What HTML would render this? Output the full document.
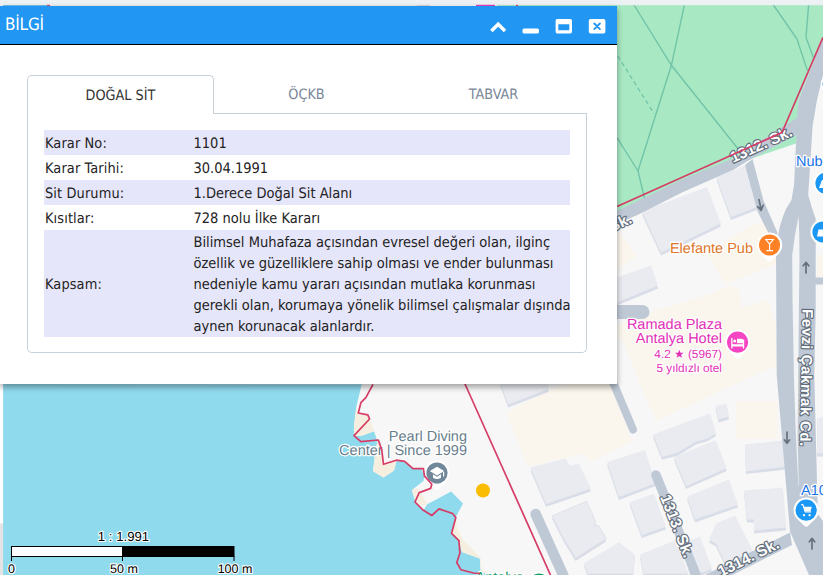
<!DOCTYPE html>
<html lang="tr">
<head>
<meta charset="utf-8">
<title>BİLGİ</title>
<style>
html,body{margin:0;padding:0;}
body{text-rendering:geometricPrecision;width:823px;height:575px;overflow:hidden;position:relative;background:#eef1f3;font-family:"DejaVu Sans Condensed","DejaVu Sans","Liberation Sans",sans-serif;}
#map{position:absolute;left:0;top:0;width:823px;height:575px;display:block;}
#panel{position:absolute;left:0;top:6px;width:617px;height:378px;background:#fff;box-shadow:0 3px 6px rgba(0,0,0,.16),0 3px 6px rgba(0,0,0,.23);}
#hdr{position:absolute;left:0;top:0;width:617px;height:38px;background:#2196f3;border-bottom:1px solid #000;color:#fff;}
#hdr .ttl{position:absolute;left:5px;top:9px;font-size:17px;line-height:20px;letter-spacing:-.2px;white-space:nowrap;}
#hdr svg{position:absolute;left:0;top:0;}
.tabs{position:absolute;left:27px;top:69px;width:560px;height:37px;}
.tab{position:absolute;top:0;height:36px;line-height:40px;text-align:center;font-size:14.3px;color:#7a8799;white-space:nowrap;}
.tab.act{left:0;width:185px;border:1px solid #c8d0d8;border-bottom:none;border-radius:5px 5px 0 0;color:#333;background:#fff;height:38px;}
.tabline{position:absolute;left:186px;right:0;top:38px;height:1px;background:#c8d0d8;}
.box{position:absolute;left:27px;top:107px;width:558px;height:239px;border:1px solid #c8d0d8;border-top:none;border-radius:0 0 5px 5px;}
table{position:absolute;left:44px;top:124px;width:526px;table-layout:fixed;border-collapse:collapse;font-size:14.4px;color:#222;}
td{box-sizing:border-box;padding:4px 0 0 1px;height:25px;line-height:21px;vertical-align:top;white-space:nowrap;}
td.m{padding-top:3.4px;}
td.k{width:148.5px;letter-spacing:.12px;}
td.v{letter-spacing:0;font-size:14.5px;}
tr.o{background:#e6e6fa;}
</style>
</head>
<body>
<svg id="map" width="823" height="575" viewBox="0 0 823 575">
<rect x="0" y="0" width="823" height="575" fill="#f7f7f7"/>
<!-- beige blocks -->
<g fill="#faf6ed">
<polygon points="617,228 637,256 617,270"/>
<polygon points="707,252.6 753,224.4 764,221 778,263 725,284"/>
<polygon points="617,325 650,312 714,293 728,286 738.5,288 741.6,308 767.7,299.6 776,325 776,366 768,369 656,421 640,384 625,345 617,335"/>
<polygon points="506.4,412.4 563,384 610,384 632,441.5 589.3,462.5 585.7,453.4 566.5,458 552,460.7 539,464.3 527.4,466"/>
<polygon points="736.4,401 777.5,401 777.5,439 736.4,439"/>
<polygon points="817,255 823,255 823,277 817,277"/>
</g>
<!-- buildings -->
<g fill="#d9dde7" transform="translate(0,1.400)">
<polygon points="642,213 707,188.5 721,225 661,254"/>
<polygon points="716.5,178.7 746,166.5 758,208 731,218.7"/>
<polygon points="617,279 651,267 658,287 617,304"/>
<polygon points="744.8,445.8 785,441.7 786.6,468 746,472.7"/>
<polygon points="744,492 783,489 786,529 754,532 754,521 747,521"/>
<polygon points="673.8,458.4 715.6,441.7 726.7,469.5 686,487.6"/>
<polygon points="687,498 729,481 738,506 695,521"/>
<polygon points="716,525 735,517 757,560 730,575 716,545 709,541"/>
<polygon points="653,436 710,414.6 716,434.7 707,440 696,443 678,454 662,458.4"/>
<polygon points="607,463.5 645,451.5 655.6,484.6 619,498.5"/>
<polygon points="629.6,503.7 654,495 666,528 641.7,536.7"/>
<polygon points="640,556 674.8,542 688.7,575 643.5,575"/>
<polygon points="530.4,469 565,460 570,467 579,465.4 591,490 546,505.4"/>
<polygon points="552,517.3 586.8,502.6 595.8,523.5 593.7,526.3 599.3,527.7 606.2,540.2 575.6,559.7 564.5,541.6"/>
<polygon points="584,564.6 619,543.7 634.8,556 633,575 588,575"/>
<polygon points="500,384 548.3,384 548.3,390.5 508.2,406"/>
<polygon points="715.6,407.5 726.5,405 729,418 718.5,421"/>
<polygon points="683,545 700,538 712,570 700,575 690,575"/>
<polygon points="817,420 823,418 823,455 817,455"/>
</g>
<g fill="#e9ebf1" transform="translate(0,-1.400)">
<polygon points="642,213 707,188.5 721,225 661,254"/>
<polygon points="716.5,178.7 746,166.5 758,208 731,218.7"/>
<polygon points="617,279 651,267 658,287 617,304"/>
<polygon points="744.8,445.8 785,441.7 786.6,468 746,472.7"/>
<polygon points="744,492 783,489 786,529 754,532 754,521 747,521"/>
<polygon points="673.8,458.4 715.6,441.7 726.7,469.5 686,487.6"/>
<polygon points="687,498 729,481 738,506 695,521"/>
<polygon points="716,525 735,517 757,560 730,575 716,545 709,541"/>
<polygon points="653,436 710,414.6 716,434.7 707,440 696,443 678,454 662,458.4"/>
<polygon points="607,463.5 645,451.5 655.6,484.6 619,498.5"/>
<polygon points="629.6,503.7 654,495 666,528 641.7,536.7"/>
<polygon points="640,556 674.8,542 688.7,575 643.5,575"/>
<polygon points="530.4,469 565,460 570,467 579,465.4 591,490 546,505.4"/>
<polygon points="552,517.3 586.8,502.6 595.8,523.5 593.7,526.3 599.3,527.7 606.2,540.2 575.6,559.7 564.5,541.6" stroke="#dadee6" stroke-width="0.800"/>
<polygon points="584,564.6 619,543.7 634.8,556 633,575 588,575"/>
<polygon points="500,384 548.3,384 548.3,390.5 508.2,406"/>
<polygon points="715.6,407.5 726.5,405 729,418 718.5,421"/>
<polygon points="683,545 700,538 712,570 700,575 690,575"/>
<polygon points="817,420 823,418 823,455 817,455"/>
</g>
<!-- park -->
<polygon fill="#a8e9c4" points="617,5 823,5 823,38 798.6,100 796,143.5 752.6,158.3 733,167 617,222"/>
<g fill="none" stroke="#72c4a8" stroke-width="1.400">
<path d="M634,5 L671.400,65.300 L739,150"/>
<path d="M684.400,5 L671.400,65.300 L638,171 L645.400,202"/>
<path d="M617,137.600 L638,171"/>
<path d="M773.400,5 L797,39 L807.300,70.400"/>
<path d="M808.600,5 L806,37.400 L813.400,57.400"/>
<path d="M617.800,56 L654,113.600" stroke-dasharray="4.500 3" stroke-width="1.300"/>
<path d="M739,150 L744,163"/>
</g>
<!-- roads -->
<g fill="#bfc9d6">
<polygon points="823,38 798.6,100 797,118 796,143.5 794,185 791.5,200 786,209 782.8,217 780,226 777.5,238 776,255 776.7,375 790,531.5 809,575 823,575 823,521 817.8,514 814.3,375 815.7,310 815.7,219 811.6,206.7 808.2,195 812.6,126 817,100 823,75"/>
<polygon points="797,118 766,137.5 733,158.5 683,179 617,211 617,224 640,213.8 683,192 733,170 752.6,158 797,134.8"/>
<polygon points="745,165 752.5,159 763.5,200.4 777.4,232.6 776,245 768.7,233.5 757.4,211"/>
<polygon points="790,532.4 705,575 732,575 792,545"/>
<polygon points="814,277.5 823,277.5 823,284.5 814,284.5"/>
</g>
<g fill="none" stroke="#bfc9d6" stroke-width="8" stroke-linecap="round">
<path d="M610,375 L633,429.5"/>
<path d="M535.6,514 L565.4,580" stroke-width="10.500"/>
<path d="M656,475 L698,580" stroke-width="9.500"/>
<path d="M600,312 L642.5,312" stroke-width="14"/>
</g>
<!-- median -->
<polygon fill="#f3f4f5" points="798.5,216 795,235 792.2,255 792.5,300 794,380 796,438 798.4,486 798.8,486 797.6,438 798.2,380 799,300 799.5,255 799.2,232"/>
<!-- sea -->
<polygon fill="#90daee" points="0,384 361.7,384.3 356.5,406 354,425 354,435.7 361.7,435.7 374,431.3 377.4,441 375,455 373,471.3 383.5,477.4 394,470.4 396.5,461 404.6,461.3 413,468.6 421.3,468.6 424.4,475.9 423.4,481 411.9,490 415.5,502 423.4,510.3 427.2,504.3 451.2,491.5 463,503.4 456.4,516 455.8,517.6 451.6,533.3 458.9,540.6 462,552 479.8,558.4 480.8,572 490,575 0,575"/>
<!-- beach -->
<g fill="#f6efdf">
<polygon points="356.2,408 358.3,413 367.8,414.8 369.6,419 377.4,440 374,431.3 361.7,435.7 354,435.7 354,425"/>
<polygon points="377.4,441 381.7,449.6 383.5,464.3 396.5,461 394,470.4 383.5,477.4 373,471.3 375,455"/>
<polygon points="411.9,490 417,488 427.6,503.4 423.4,506 415.5,502"/>
<polygon points="455.8,517.6 456.8,527 463,539.5 480.8,558 481,569 492,575 480.8,572 479.8,558.4 462,552 458.9,540.6 451.6,533.3"/>
</g>
<circle cx="483" cy="490.500" r="7" fill="#fbbc04"/>
<!-- top strip / left strip -->
<rect x="0" y="0" width="823" height="5.200" fill="#eef1f3"/>
<rect x="3" y="5" width="44" height="1" fill="#74bfe9"/>
<rect x="47" y="4.800" width="3" height="1.200" fill="#d2486c"/>
<rect x="50" y="5.200" width="367" height="0.800" fill="#ece6e2"/>
<rect x="417" y="5" width="13" height="1" fill="#dccfd2"/>
<rect x="476" y="4.800" width="19" height="1.200" fill="#e63cc0"/>
<rect x="497" y="5" width="120" height="1" fill="#a8e9c4"/>
<rect x="516" y="4.800" width="2" height="1.200" fill="#d2486c"/>
<rect x="0" y="384" width="3.100" height="140" fill="#ffffff"/>
<rect x="0" y="523.500" width="3.100" height="52" fill="#e4e4e4"/>
<!-- street labels -->
<g font-family="'Liberation Sans','DejaVu Sans',sans-serif" font-weight="bold" fill="#ffffff" stroke="#616c7a" stroke-width="2.300" stroke-linejoin="round" paint-order="stroke" font-size="15.500">
<text transform="translate(733,163) rotate(-24.500)">1312. Sk.</text>
<text transform="translate(633,222.500) rotate(-24.500)" text-anchor="end">1312. Sk.</text>
<text transform="translate(802.500,309) rotate(91)" font-size="15" letter-spacing="0.650">Fevzi Çakmak Cd.</text>
<text transform="translate(660,497) rotate(68.500)">1313. Sk.</text>
<text transform="translate(721,577) rotate(-26.500)">1314. Sk.</text>
</g>
<!-- POI labels -->
<g font-family="'Liberation Sans','DejaVu Sans',sans-serif" stroke="#ffffff" stroke-width="2.500" stroke-linejoin="round" paint-order="stroke">
<text x="753" y="252.500" text-anchor="end" font-size="14.500" fill="#e0762a">Elefante Pub</text>
<text x="722" y="328.500" text-anchor="end" font-size="14.500" fill="#e22fb5">Ramada Plaza</text>
<text x="722" y="343" text-anchor="end" font-size="14.500" fill="#e22fb5">Antalya Hotel</text>
<text x="722" y="358" text-anchor="end" font-size="11.800" fill="#e22fb5">4.2 ★ (5967)</text>
<text x="722" y="371.800" text-anchor="end" font-size="11.800" fill="#e22fb5">5 yıldızlı otel</text>
<text x="467" y="441" text-anchor="end" font-size="14.500" fill="#687e8d">Pearl Diving</text>
<text x="467" y="455" text-anchor="end" font-size="14.500" fill="#687e8d">Center | Since 1999</text>
<text x="796" y="165.500" font-size="14.500" fill="#1a73e8">Nub</text>
<text x="801" y="495" font-size="14.500" fill="#1a73e8">A10</text>
<text x="475.500" y="582" font-size="14.500" fill="#129a5c">Antalya</text>
</g>
<!-- markers -->
<g>
<path d="M760.1,253.3 L768.0,260.9 Q769.6,262.3 771.2,260.9 L779.1,253.3 Z" fill="#fff"/><circle cx="769.6" cy="245" r="12.6" fill="#fff"/><circle cx="769.6" cy="245" r="10.6" fill="#ff8126"/><path d="M764.7,239 h9.800 l-4.300,5.300 v5.700 h2.700 v1.300 h-6.600 v-1.300 h2.700 v-5.700 z" fill="#fff"/><path d="M767.0,240.1 h5.200 l-2.600,3.200 z" fill="#ff8126"/>
<path d="M728.1,350.5 L736.0,358.1 Q737.6,359.5 739.2,358.1 L747.1,350.5 Z" fill="#fff"/><circle cx="737.6" cy="342.2" r="12.6" fill="#fff"/><circle cx="737.6" cy="342.2" r="10.6" fill="#f545c3"/><path d="M731.2,338.0 h1.300 v6.200 h10.400 v-4.600 h1.300 v9 h-1.300 v-2.200 h-10.400 v2.200 h-1.300 z M737.0,338.8 h4.500 a1.500,1.500 0 0 1 1.500,1.500 v3 h-6 z" fill="#fff"/><circle cx="734.7" cy="340.9" r="1.500" fill="#fff"/>
<path d="M427.5,481.4 L435.4,489.0 Q437.0,490.4 438.6,489.0 L446.5,481.4 Z" fill="#fff"/><circle cx="437" cy="473.1" r="12.6" fill="#fff"/><circle cx="437" cy="473.1" r="10.6" fill="#70889a"/><path d="M437,466.8 l7.200,4.300 l-7.200,4.300 l-7.200,-4.300 z" fill="#fff"/><path d="M433,474.3 l4,2.400 l4,-2.400 v3.400 q-4,2.600 -8,0 z" fill="#fff"/><path d="M443,471.90000000000003 h1.200 v4.600 h-1.200 z" fill="#fff"/>
<path d="M796.7,518.5 L804.6,526.1 Q806.2,527.5 807.8,526.1 L815.7,518.5 Z" fill="#fff"/><circle cx="806.2" cy="510.2" r="12.6" fill="#fff"/><circle cx="806.2" cy="510.2" r="10.6" fill="#1b98f5"/><path d="M801.2,504.59999999999997 h1.700 l2.300,7.200 h5.800" fill="none" stroke="#fff" stroke-width="1.200" stroke-linejoin="round"/><path d="M803.6,506.7 h8.200 l-1.300,4.300 h-5.600 z" fill="#fff"/><circle cx="804.0" cy="515.2" r="1.100" fill="#fff"/><circle cx="809.6" cy="515.2" r="1.100" fill="#fff"/>
<circle cx="826" cy="183.200" r="12.600" fill="#fff"/><circle cx="826" cy="183.200" r="10.600" fill="#1b98f5"/><path d="M819,188 l3,-8 h6 v8z" fill="#fff"/>
<path d="M813.5,240.3 L821.4,247.9 Q823.0,249.3 824.6,247.9 L832.5,240.3 Z" fill="#fff"/><circle cx="823" cy="232" r="12.6" fill="#fff"/><circle cx="823" cy="232" r="10.6" fill="#1b98f5"/><path d="M817,236.5 l1.500,-7 h8 v7z" fill="#fff"/>
<circle cx="827.500" cy="84" r="7" fill="#fff"/><circle cx="828" cy="84" r="5.500" fill="#1b98f5"/>
<circle cx="539" cy="584" r="12.600" fill="#fff"/><circle cx="539" cy="584" r="10.600" fill="#12a060"/>
</g>
<!-- arrows -->
<g fill="none" stroke="#66717f" stroke-width="1.700" stroke-linecap="round" stroke-linejoin="round">
<path d="M759,199.600 L761.200,210 M757.700,206.600 L761.200,210.300 L763.200,205.200"/>
<path d="M806,273 V262.500 M803.200,265.800 L806,262.300 L808.800,265.800"/>
<path d="M787,432 V443 M784.300,439.800 L787,443.300 L789.700,439.800"/>
<path d="M812,549 V538.500 M809.300,541.800 L812,538.300 L814.700,541.800"/>
</g>
<!-- scale bar -->
<g>
<rect x="11.500" y="546.500" width="111" height="10" fill="#fff" stroke="#000" stroke-width="1"/>
<rect x="122.500" y="546.500" width="111.500" height="10" fill="#000" stroke="#000" stroke-width="1"/>
<path d="M11.500,556 V561 M122.500,556 V561 M234,556 V561" stroke="#000" stroke-width="1" fill="none"/>
<g font-family="'Liberation Sans','DejaVu Sans',sans-serif" font-size="12.500" fill="#000" stroke="#fff" stroke-width="2.200" stroke-linejoin="round" paint-order="stroke" text-anchor="middle">
<text x="123.500" y="541" font-size="13.200">1 : 1.991</text>
<text x="11.500" y="572.500">0</text>
<text x="124" y="572.500">50 m</text>
<text x="235" y="572.500">100 m</text>
</g>
</g>
<!-- red lines -->
<g fill="none" stroke="#d63c66" stroke-width="1.700" stroke-linejoin="round">
<path d="M823,37.400 L782,132.500 L617,206.500"/>
<path d="M465,384 L550.500,575"/>
<path d="M373,384.3 L366,397.4 L360.9,402.6 L358.3,413 L367.8,414.8 L369.6,419 L354,435.7 L360.9,441.7 L378.3,440 L381.7,449.6 L383.5,464.3 L396.3,460.2 L404.6,461.3 L413,468.6 L423.4,468.6 L424.4,475.9 L431.8,484.2 L430.7,488.4 L419.2,492.6 L415,502 L423.4,510.3 L431.8,515.5 L439,508.9 L452.6,513.5 L455.8,517.6 L451.6,533.3 L458.9,540.6 L459.9,553 L456.8,562.5 L461,569.8 L473.5,573 L480,573.5"/>
</g>

</svg>
<div id="panel">
  <div id="hdr"><span class="ttl">BİLGİ</span>
  <svg width="617" height="38" viewBox="0 6 617 38">
    <path d="M492.6 29.8 L498.2 24.2 L503.8 29.8" fill="none" stroke="#fff" stroke-width="3.4" stroke-linecap="square" stroke-linejoin="miter"/>
    <rect x="522.5" y="28.5" width="16.5" height="5" rx="1.6" fill="#fff"/>
    <path d="M557.3 19h13a1.7 1.7 0 0 1 1.700 1.700v11.100a1.700 1.700 0 0 1 -1.700 1.700h-13a1.700 1.700 0 0 1 -1.700 -1.700v-11.100a1.700 1.700 0 0 1 1.700 -1.700zM558.300 24.300v6h11v-6z" fill="#fff" fill-rule="evenodd"/>
    <rect x="588.8" y="19" width="16.6" height="14.500" rx="1.800" fill="#fff"/>
    <path d="M594.300 23.500l5.600 5.600M599.900 23.500l-5.600 5.600" stroke="#2196f3" stroke-width="1.900" stroke-linecap="round"/>
  </svg>
  </div>
  <div class="tabs">
    <div class="tab act">DOĞAL SİT</div>
    <div class="tab" style="left:186px;width:187px;">ÖÇKB</div>
    <div class="tab" style="left:373px;width:187px;">TABVAR</div>
    <div class="tabline"></div>
  </div>
  <div class="box"></div>
  <table>
    <tr class="o"><td class="k">Karar No:</td><td class="v">1101</td></tr>
    <tr><td class="k">Karar Tarihi:</td><td class="v">30.04.1991</td></tr>
    <tr class="o"><td class="k">Sit Durumu:</td><td class="v">1.Derece Doğal Sit Alanı</td></tr>
    <tr><td class="k">Kısıtlar:</td><td class="v">728 nolu İlke Kararı</td></tr>
    <tr class="o"><td class="k" style="padding-top:45px;">Kapsam:</td><td class="v m" style="height:107px;"><div style="height:103px;">Bilimsel Muhafaza açısından evresel değeri olan, ilginç<br>özellik ve güzelliklere sahip olması ve ender bulunması<br>nedeniyle kamu yararı açısından mutlaka korunması<br>gerekli olan, korumaya yönelik bilimsel çalışmalar dışında<br>aynen korunacak alanlardır.</div></td></tr>
  </table>
</div>
</body>
</html>
